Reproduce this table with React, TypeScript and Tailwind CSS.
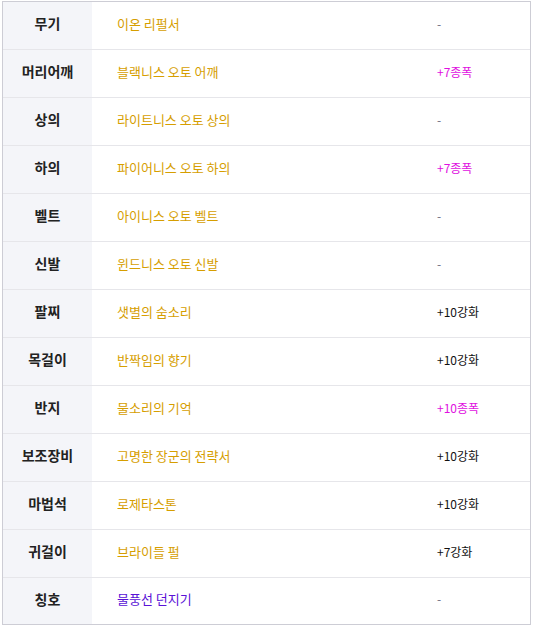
const rows: { label: string; name: string; value: string; nameColor?: string; valueColor?: string }[] = [
  { label: "무기", name: "이온 리펄서", value: "-" },
  { label: "머리어깨", name: "블랙니스 오토 어깨", value: "+7종폭" },
  { label: "상의", name: "라이트니스 오토 상의", value: "-" },
  { label: "하의", name: "파이어니스 오토 하의", value: "+7종폭" },
  { label: "벨트", name: "아이니스 오토 벨트", value: "-" },
  { label: "신발", name: "윈드니스 오토 신발", value: "-" },
  { label: "팔찌", name: "샛별의 숨소리", value: "+10강화" },
  { label: "목걸이", name: "반짝임의 향기", value: "+10강화" },
  { label: "반지", name: "물소리의 기억", value: "+10종폭" },
  { label: "보조장비", name: "고명한 장군의 전략서", value: "+10강화" },
  { label: "마법석", name: "로제타스톤", value: "+10강화" },
  { label: "귀걸이", name: "브라이들 펄", value: "+7강화" },
  { label: "칭호", name: "물풍선 던지기", value: "-", nameColor: "text-[#5a12d6]" },
];

const valueClass = (v: string) => {
  if (v === "-") return "text-[#6b6b80]";
  if (v.includes("종폭")) return "text-[#e010e0]";
  return "text-[#111111]";
};

export default function App() {
  return (
    <div
      className="bg-white pt-[1px] pl-[2px]"
      style={{ fontFamily: '"Noto Sans CJK KR", "Noto Sans", sans-serif' }}
    >
      <div className="w-[529px] border border-[#cdcdd5]">
        {rows.map((r, i) => {
          const last = i === rows.length - 1;
          return (
            <div
              key={r.label}
              className={`flex items-stretch ${last ? "h-[46px]" : "h-[48px] border-b border-[#e6e6ea]"}`}
            >
              <div className="w-[89px] shrink-0 bg-[#f4f5f9] flex items-center justify-center pb-[4px] text-[14px] font-bold text-[#222222]">
                {r.label}
              </div>
              <div
                className={`w-[320px] shrink-0 flex items-center pl-[25px] pb-[4px] text-[13px] ${r.nameColor ?? "text-[#d69e00]"}`}
              >
                {r.name}
              </div>
              <div className={`flex-1 flex items-center pl-[25px] pb-[4px] text-[12px] ${valueClass(r.value)}`}>
                {r.value}
              </div>
            </div>
          );
        })}
      </div>
    </div>
  );
}
